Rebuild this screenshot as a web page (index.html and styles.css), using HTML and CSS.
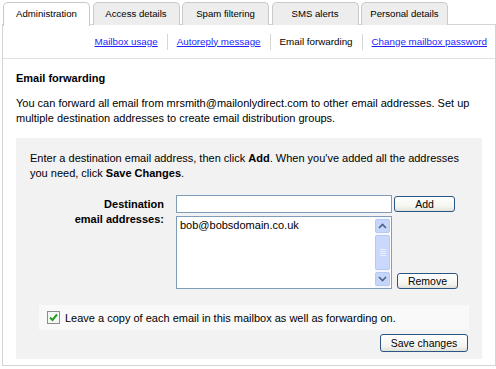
FILE: index.html
```html
<!DOCTYPE html>
<html lang="en">
<head>
    <meta charset="UTF-8">
    <title>Email forwarding</title>
    <link rel="stylesheet" href="styles.css">
</head>
<body>
    <div class="tabs">
        <div class="tab active">Administration</div>
        <div class="tab">Access details</div>
        <div class="tab">Spam filtering</div>
        <div class="tab">SMS alerts</div>
        <div class="tab">Personal details</div>
    </div>

    <div class="panel">
        <div class="subnav">
            <a href="#">Mailbox usage</a>
            <a href="#">Autoreply message</a>
            <span class="current">Email forwarding</span>
            <a href="#">Change mailbox password</a>
        </div>

        <div class="content">
            <h2>Email forwarding</h2>
            <p class="intro">You can forward all email from mrsmith@mailonlydirect.com to other email addresses. Set up multiple destination addresses to create email distribution groups.</p>

            <div class="box">
                <p class="hint">Enter a destination email address, then click <b>Add</b>. When you've added all the addresses you need, click <b>Save Changes</b>.</p>

                <div class="form-grid">
                    <div class="field-label">
                        <div>Destination</div>
                        <div>email addresses:</div>
                    </div>
                    <input class="text-input" type="text">
                    <button class="btn btn-add">Add</button>
                    <div class="listbox">
                        <div class="list-items">bob@bobsdomain.co.uk</div>
                        <div class="scrollbar">
                            <div class="sb-btn">
                                <svg width="9" height="6" viewBox="0 0 9 6"><path d="M1 5 L4.5 1.5 L8 5" fill="none" stroke="#4d6185" stroke-width="1.6"/></svg>
                            </div>
                            <div class="sb-thumb"><span></span><span></span><span></span><span></span></div>
                            <div class="sb-btn">
                                <svg width="9" height="6" viewBox="0 0 9 6"><path d="M1 1 L4.5 4.5 L8 1" fill="none" stroke="#4d6185" stroke-width="1.6"/></svg>
                            </div>
                        </div>
                    </div>
                    <button class="btn btn-remove">Remove</button>
                </div>

                <div class="keep-copy">
                    <span class="check">
                        <svg width="9" height="9" viewBox="0 0 9 9"><path d="M1 4.5 L3.5 7 L8 1.5" fill="none" stroke="#21a121" stroke-width="2"/></svg>
                    </span>
                    <span>Leave a copy of each email in this mailbox as well as forwarding on.</span>
                </div>

                <div class="actions">
                    <button class="btn btn-save">Save changes</button>
                </div>
            </div>
        </div>
    </div>
</body>
</html>
```

FILE: styles.css
```css
body {
    margin: 0;
    font-family: "Liberation Sans", Arial, sans-serif;
    font-size: 11px;
    color: #000;
    background: #fff;
}
.tabs {
    display: flex;
    gap: 2.5px;
    padding: 2px 0 0 3px;
    height: 22px;
    position: relative;
    z-index: 1;
}
.tab {
    width: 87px;
    box-sizing: border-box;
    height: 23px;
    border: 1px solid #c9c9c9;
    border-bottom: none;
    border-radius: 5px 5px 0 0;
    background: #ededed;
    font-size: 9.6px;
    text-align: center;
    line-height: 21px;
}
.tab.active {
    background: #fff;
    height: 24px;
}
.panel {
    margin-left: 2px;
    border: 1px solid #d4d4d4;
    padding-bottom: 6px;
}
.subnav {
    height: 33px;
    display: flex;
    justify-content: flex-end;
    align-items: center;
    padding-right: 8px;
    border-bottom: 1px solid #e2e2e2;
    font-size: 9.8px;
}
.subnav a,
.subnav span {
    padding: 0 9px;
    line-height: 16px;
    border-left: 1px solid #d6d6d6;
}
.subnav > :first-child { border-left: none; }
.subnav > :last-child { padding-right: 0; }
.subnav a { color: #1f1fff; }
.content {
    padding: 0 13px;
}
h2 {
    margin: 12px 0 0;
    font-size: 11px;
    line-height: 15px;
}
.intro {
    margin: 10px 0 12px;
    line-height: 15px;
}
.box {
    background: #f2f2f2;
    padding: 13px 14px 7px;
}
.hint {
    margin: 0;
    line-height: 15px;
}
.form-grid {
    display: grid;
    grid-template-columns: 146px 218px auto;
    grid-template-rows: 18px 73px;
    row-gap: 3px;
    margin-top: 14px;
}
.field-label {
    grid-row: 1 / span 2;
    font-weight: bold;
    text-align: right;
    padding: 2px 12px 0 0;
    line-height: 15px;
}
.text-input {
    width: 216px;
    height: 18px;
    box-sizing: border-box;
    border: 1px solid #7f9db9;
    margin: 0;
    padding: 1px 3px;
    font: inherit;
}
.btn {
    font-family: inherit;
    font-size: 10.5px;
    height: 16px;
    padding: 0 8px;
    border: 1px solid #2a5585;
    border-radius: 3px;
    background: linear-gradient(#ffffff, #f4f4f0 70%, #e2e1da);
    color: #000;
    line-height: 14px;
}
.btn-add {
    width: 61px;
    align-self: start;
    margin-top: 1px;
}
.btn-remove {
    width: 61px;
    align-self: end;
    margin-left: 3px;
}
.listbox {
    width: 216px;
    height: 73px;
    box-sizing: border-box;
    border: 1px solid #7f9db9;
    background: #fff;
    display: flex;
}
.list-items {
    flex: 1;
    padding: 1px 3px;
    line-height: 14px;
}
.scrollbar {
    width: 15px;
    background: #f4f7fd;
    padding: 2px 0;
    display: flex;
    flex-direction: column;
    gap: 2px;
    margin-right: 1px;
}
.sb-btn {
    height: 12px;
    border: 1px solid #b7c9f1;
    border-radius: 2px;
    background: #c6d6fb;
    display: flex;
    align-items: center;
    justify-content: center;
}
.sb-thumb {
    flex: 1;
    border: 1px solid #b7c9f1;
    border-radius: 2px;
    background: #c9d8fc;
    display: flex;
    flex-direction: column;
    justify-content: center;
    align-items: center;
    gap: 1px;
}
.sb-thumb span {
    width: 6px;
    height: 1px;
    background: #e8efff;
}
.keep-copy {
    margin: 16px -1px 0 9px;
    height: 25px;
    background: #f9f9f9;
    display: flex;
    align-items: center;
    gap: 5px;
    padding-left: 8px;
}
.check {
    width: 11px;
    height: 11px;
    border: 1px solid #8c8c8c;
    background: #f6f6f6;
    display: flex;
    align-items: center;
    justify-content: center;
}
.actions {
    display: flex;
    justify-content: flex-end;
    margin-top: 4px;
}
.btn-save {
    width: 88px;
    height: 18px;
}
```
